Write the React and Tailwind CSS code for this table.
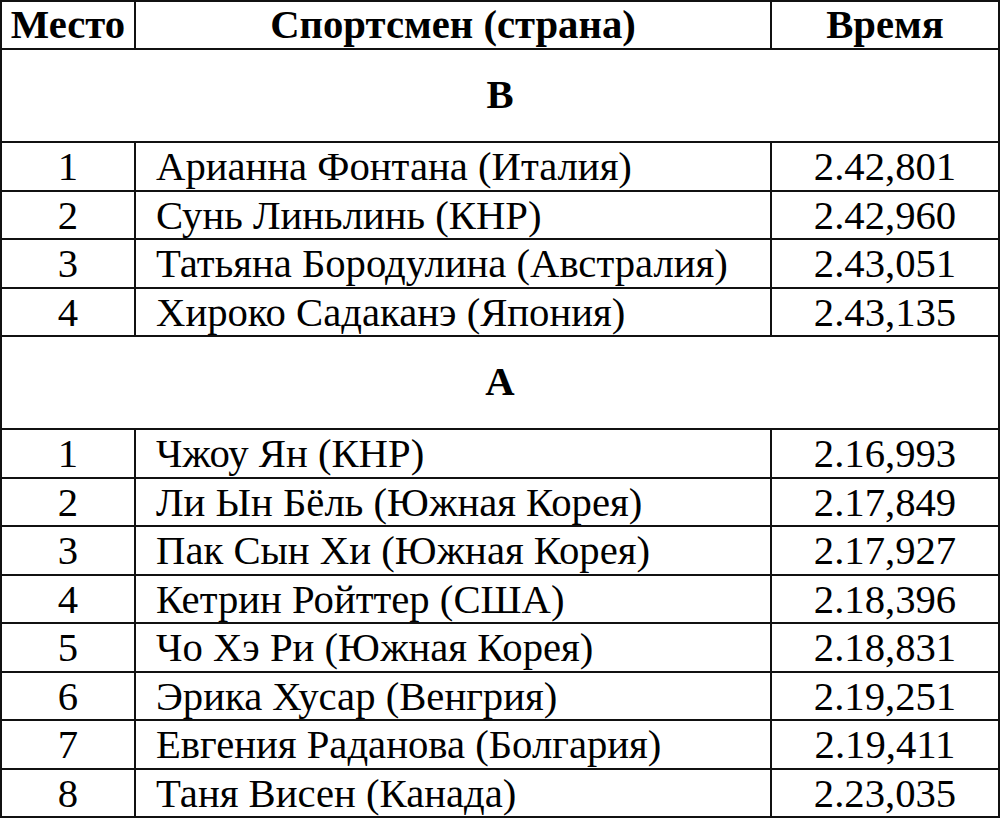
import React from "react";

const groups = [
  {
    title: "В",
    rows: [
      ["1", "Арианна Фонтана (Италия)", "2.42,801"],
      ["2", "Сунь Линьлинь (КНР)", "2.42,960"],
      ["3", "Татьяна Бородулина (Австралия)", "2.43,051"],
      ["4", "Хироко Садаканэ (Япония)", "2.43,135"],
    ],
  },
  {
    title: "А",
    rows: [
      ["1", "Чжоу Ян (КНР)", "2.16,993"],
      ["2", "Ли Ын Бёль (Южная Корея)", "2.17,849"],
      ["3", "Пак Сын Хи (Южная Корея)", "2.17,927"],
      ["4", "Кетрин Ройттер (США)", "2.18,396"],
      ["5", "Чо Хэ Ри (Южная Корея)", "2.18,831"],
      ["6", "Эрика Хусар (Венгрия)", "2.19,251"],
      ["7", "Евгения Раданова (Болгария)", "2.19,411"],
      ["8", "Таня Висен (Канада)", "2.23,035"],
    ],
  },
];

export default function App() {
  return (
    <div
      className="w-[1000px] h-[820px] bg-white text-black overflow-hidden"
      style={{ fontFamily: '"Liberation Serif", "Times New Roman", serif' }}
    >
      <div className="border-l-2 border-t-2 border-[#111] text-[40.7px] leading-none">
        <div className="flex h-[48px] font-bold">
          <div className="w-[134px] flex items-center justify-center border-r-2 border-b-2 border-[#111]">Место</div>
          <div className="w-[636px] flex items-center justify-center border-r-2 border-b-2 border-[#111]">Спортсмен (страна)</div>
          <div className="w-[228px] flex items-center justify-center border-r-2 border-b-2 border-[#111]">Время</div>
        </div>
        {groups.map((g) => (
          <div key={g.title}>
            <div className="h-[93px] flex items-center justify-center font-bold border-r-2 border-b-2 border-[#111]">
              {g.title}
            </div>
            {g.rows.map((r) => (
              <div key={r[1]} className="flex h-[48.5px]">
                <div className="w-[134px] flex items-center justify-center pt-[3px] border-r-2 border-b-2 border-[#111]">{r[0]}</div>
                <div className="w-[636px] flex items-center pl-5 pt-[3px] border-r-2 border-b-2 border-[#111] whitespace-nowrap">{r[1]}</div>
                <div className="w-[228px] flex items-center justify-center pt-[3px] border-r-2 border-b-2 border-[#111]">{r[2]}</div>
              </div>
            ))}
          </div>
        ))}
      </div>
    </div>
  );
}
